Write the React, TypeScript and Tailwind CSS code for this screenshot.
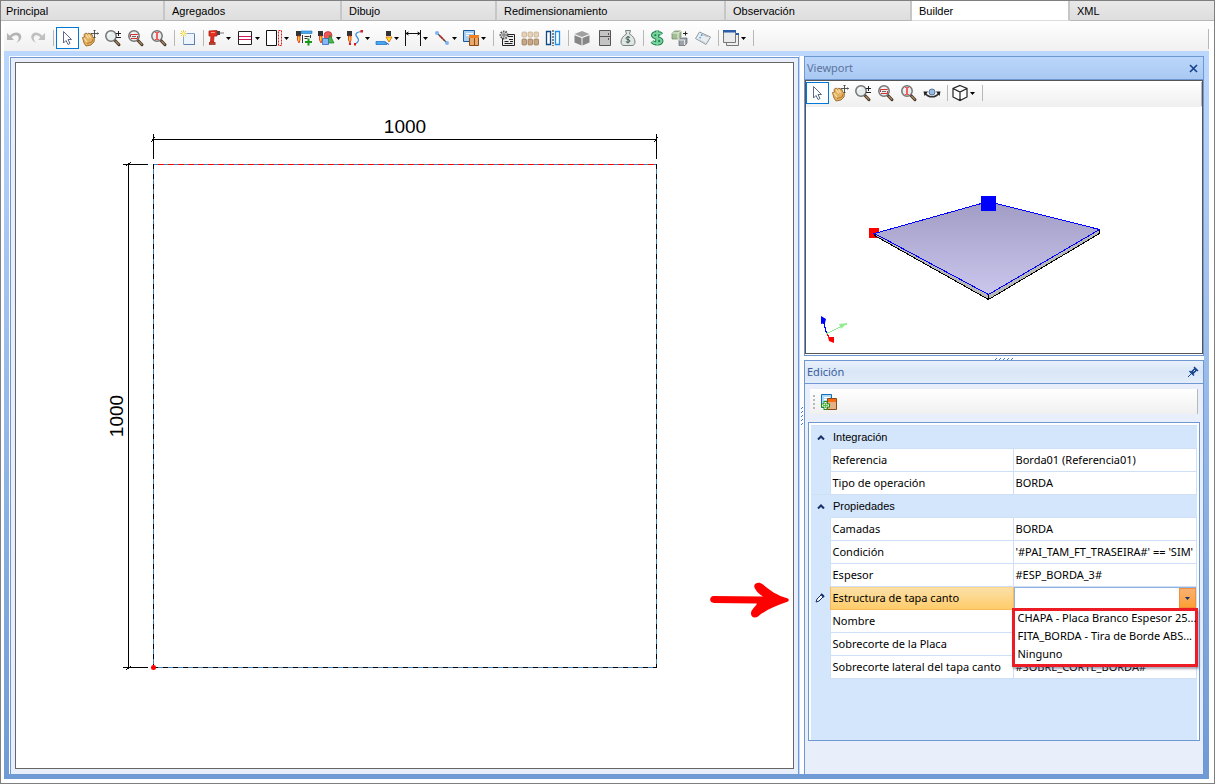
import React from "react";

const Svg = ({ children }: { children: React.ReactNode }) => (
  <svg width="18" height="18" viewBox="0 0 18 18" fill="none" aria-hidden="true" className="shrink-0">
    {children}
  </svg>
);

const Undo = () => (
  <Svg>
    <path d="M1 4v7h7L5.600 8.600C8 5.500 11.500 5.500 12.500 8c.8 2-.5 4.500-2.500 6 4-1.500 6-4.500 5-7.500C13.700 2.800 8 2.200 3.800 6.800z" fill="#b4b4b4" />
  </Svg>
);
const Redo = () => (
  <Svg>
    <path d="M16 4v7H9l2.400-2.400C9 5.500 6 5.500 5 8c-.8 2 .5 4.500 2.500 6C3.500 12.500 1.500 9.500 2.500 6.500 3.800 2.800 9 2.200 13.200 6.800z" fill="#c0c0c0" />
  </Svg>
);
const Pointer = () => (
  <Svg>
    <path d="M5.500 2.500v11.500l2.500-2.500 2 4 2-1-2-4h3.500z" fill="#fff" stroke="#5a6a88" />
  </Svg>
);
const Hand = () => (
  <Svg>
    <path d="M1.500 8.500l2-.5L3 5.500l2-1.500 1.500 1L8 4l1.500 1.500L11 5.500l1 3 1.500 1-.5 3.500-3 3-5 1-2-3z" fill="#e2b060" stroke="#9a6a28" strokeWidth=".9" />
    <path d="M3 9l3 4M5 5.500l2.500 4M7.500 5.500l2 3.500" stroke="#fbe3ac" strokeWidth="1.200" />
    <path d="M6 14.500l5-1.500 1-3" stroke="#b47c34" />
    <path d="M13.500 1v8M9.500 4.500h8M12.500 2l1-1 1 1M12.500 8l1 1 1-1M16.500 3.500l1 1-1 1" stroke="#444" strokeWidth=".9" />
  </Svg>
);
const Lens = ({ children }: { children?: React.ReactNode }) => (
  <Svg>
    <path d="M10.500 11l4.500 4.700" stroke="#4a3a2c" strokeWidth="3" strokeLinecap="round" />
    <path d="M11.500 12l3.500 3.700" stroke="#b08a5a" strokeWidth="1.200" />
    <circle cx="7" cy="7" r="5.200" fill="#e6eef0" stroke="#747474" strokeWidth="1.500" />
    <path d="M4 6.500a3 3 0 013-2.500" stroke="#fff" />
    {children}
  </Svg>
);
const ZoomPm = () => (
  <Lens>
    <path d="M12 4.500h5M14.500 2v5M12 8.500h5" stroke="#222" />
  </Lens>
);
const ZoomWin = () => (
  <Lens>
    <path d="M3.500 8V5.500H10.500V6M10.500 7V9.500H5M4 9.500h1" stroke="#d83030" />
    <path d="M5 7.500h4" stroke="#666" />
  </Lens>
);
const ZoomFit = () => (
  <Lens>
    <path d="M5 3.500h4M5 10.500h4" stroke="#f04848" />
    <path d="M7 3v8" stroke="#f46060" strokeWidth="2" />
  </Lens>
);
const NewItem = () => (
  <Svg>
    <path d="M4.500 4.500h11v11h-11z" fill="#eef4fd" stroke="#88a6cc" />
    <path d="M15.500 5v11M5 15.500h11" stroke="#5c80b0" />
    <path d="M4.500 1v7M1 4.500h7M2 2l5 5M7 2L2 7" stroke="#ecca50" />
    <circle cx="4.500" cy="4.500" r="1.500" fill="#fff6a0" />
  </Svg>
);
const Drill = () => (
  <Svg>
    <path d="M2 2l8-.5V7H7l-.5 6H3.500L4 7H2z" fill="#e8301c" stroke="#a81c10" strokeWidth=".8" />
    <path d="M2 13h6.500v3H2z" fill="#c52a1c" />
    <path d="M10 2h3v4h-3z" fill="#444" />
    <path d="M13 4h4M3 15h5" stroke="#777" />
    <path d="M4 3.500h4" stroke="#ff9a8a" />
  </Svg>
);
const Shelf = () => (
  <Svg>
    <path d="M2.500 2.500h13v13h-13z" fill="#fff" stroke="#222" />
    <path d="M3 7.500h12M3 10.500h12" stroke="#d8185c" />
  </Svg>
);
const SidePanel = () => (
  <Svg>
    <path d="M1.500 1.500h10v15h-10z" fill="#fff" stroke="#111" />
    <path d="M13.500 1.500h3v15h-3z" stroke="#e01818" strokeDasharray="2 1" />
  </Svg>
);
const Bit = () => (
  <>
    <path d="M1 2h5v5H1z" fill="#333" />
    <path d="M2.500 7h2.500v4l-1 3-1.500-3z" fill="#ffd21c" stroke="#d22" strokeWidth=".8" />
  </>
);
const AddLayer = () => (
  <Svg>
    <Bit />
    <path d="M6 2h11v2.500H6z" fill="#44a8f0" stroke="#2272b8" strokeWidth=".6" />
    <path d="M7.500 6v8M15.500 6v3M9.500 7.500h5M9.500 9.500h3" stroke="#333" />
    <path d="M10 13h7M13.500 9.500v7" stroke="#189a18" strokeWidth="2" />
  </Svg>
);
const Shapes = () => (
  <Svg>
    <Bit />
    <circle cx="11" cy="6.500" r="4" fill="#f0555a" stroke="#b82c30" strokeWidth=".7" />
    <path d="M13 6l4 8H10z" fill="#48b848" stroke="#1f7a1f" strokeWidth=".7" />
    <path d="M5.500 9.500h6v6h-6z" fill="#86b8f6" stroke="#2c68c0" strokeWidth=".8" />
  </Svg>
);
const PathIcon = () => (
  <Svg>
    <Bit />
    <path d="M16 2.500C10 3 8.500 5 11 8s2 5-2.500 7.500" stroke="#3a90e0" strokeWidth="1.200" />
    <path d="M14.500 1h2.500v2.500h-2.500zM8 14h2v2.500H8zM3 14h2v2H3z" fill="#e01818" />
  </Svg>
);
const Profile = () => (
  <Svg>
    <path d="M11 2h5v5h-5z" fill="#333" />
    <path d="M11 8h6l-3 5z" fill="#ffe81c" stroke="#e06a10" strokeWidth=".9" />
    <path d="M1 12.500h9l2 3H1z" fill="#46a8f4" stroke="#1c6ab8" strokeWidth=".7" />
    <path d="M10 13l4 2.500" stroke="#1c6ab8" />
  </Svg>
);
const Dimension = () => (
  <Svg>
    <path d="M1.500 1v16M16.500 1v16M2 4.500h14M2 4.500l2.500-1.500M2 4.500L4.500 6M16 4.500L13.500 3M16 4.500L13.500 6" stroke="#111" />
  </Svg>
);
const LineTool = () => (
  <Svg>
    <path d="M4 4l10 10" stroke="#444" strokeWidth="1.200" />
    <path d="M7 7l4 4" stroke="#e02020" strokeWidth="1.800" strokeDasharray="1.500 1" />
    <circle cx="4" cy="4" r="2" fill="#80b4f0" />
    <circle cx="14" cy="14" r="2" fill="#80b4f0" />
  </Svg>
);
const Cabinets = () => (
  <Svg>
    <path d="M1.500 1.500h11v11h-11z" fill="#a8d0f6" stroke="#1a5a9a" />
    <path d="M4 4.500h7M4 6.500h3" stroke="#fff" />
    <path d="M7.500 6.500h9v10h-9z" fill="#e8a86a" stroke="#8a4a18" />
    <path d="M7 6h10v3H7z" fill="#f08020" />
    <path d="M12.500 9v7" stroke="#8a4a18" />
  </Svg>
);
const GearSheet = () => (
  <Svg>
    <path d="M4.500 5.500h12v11h-12z" fill="#eee" stroke="#222" />
    <path d="M10 7.500h5M11 10.500h4M6.500 12.500h4M12 12.500h3M6.500 14.500h8" stroke="#222" />
    <circle cx="6" cy="6" r="3.500" fill="#ddd" stroke="#555" strokeWidth="2" strokeDasharray="1.500 1" />
    <circle cx="6" cy="6" r="1.200" fill="#fff" stroke="#555" />
  </Svg>
);
const Blocks = () => (
  <Svg>
    {[1, 7, 13].map((x) => (
      <g key={x}>
        <rect x={x} y="3" width="4.500" height="5" rx="1" fill="#e5d2b8" stroke="#c0a888" strokeWidth=".7" />
        <rect x={x} y="10" width="4.500" height="6" rx="1" fill="#c8a884" stroke="#94704c" strokeWidth=".7" />
      </g>
    ))}
  </Svg>
);
const Mirror = () => (
  <Svg>
    <path d="M2.500 2.500h4v13h-4z" fill="#fff" stroke="#0e4a80" strokeWidth="1.300" />
    <path d="M11.500 2.500h4v13h-4z" fill="#fff" stroke="#2090f0" strokeWidth="1.300" />
    <path d="M9 1v16" stroke="#111" strokeDasharray="2 1" />
  </Svg>
);
const BoxIcon = () => (
  <Svg>
    <path d="M1.500 5L9 2l7.500 3L9 8z" fill="#a0a0a0" />
    <path d="M1.500 6.200L8.500 9v7.500l-7-3zM16.500 6.200L9.500 9v7.500l7-3z" fill="#868686" />
  </Svg>
);
const Fridge = () => (
  <Svg>
    <path d="M3.500 1.500h11v15h-11z" fill="#c4c4c4" stroke="#555" />
    <path d="M3.500 7.500h11M12.500 4v2M12.500 9v2" stroke="#555" />
  </Svg>
);
const MoneyBag = () => (
  <Svg>
    <path d="M6.500 1.500h5l-1 3.500c3 1.500 5.500 4.500 5.500 8 0 2-1 3.500-3 3.500H5c-2 0-3-1.500-3-3.500 0-3.500 2.500-6.500 5.500-8z" fill="#dfe6e4" stroke="#78807e" />
    <path d="M11 8.500c-1-1-4-.8-4 .8 0 1.800 4 .9 4 2.700 0 1.500-3 1.700-4.200.6M9 7v7.500" stroke="#3a5a4a" />
  </Svg>
);
const Dollar = () => (
  <Svg>
    <path d="M13.500 5.500C12 3.500 5 3.200 5 6.300S13.500 8.500 13.500 12 6 14.800 4 12.500M9.200 1.500v15" stroke="#1f8050" strokeWidth="4" />
    <path d="M13.500 5.500C12 3.500 5 3.200 5 6.300S13.500 8.500 13.500 12 6 14.800 4 12.500M9.200 1.500v15" stroke="#78d49c" strokeWidth="2" />
  </Svg>
);
const CubeMove = () => (
  <Svg>
    <path d="M1 4l3-2h6v6l-3 2H1z" fill="#a4bd96" stroke="#6c8460" strokeWidth=".7" />
    <path d="M1 4h6v6M7 4l3-2" stroke="#e8f2e0" />
    <path d="M8 11l2-2h6v5l-2 2.500H8z" fill="#9ca2a8" stroke="#5c646c" strokeWidth=".7" />
    <path d="M8 11h5.500v5" stroke="#e4e8ec" />
    <path d="M12 4.500h4.500M14.500 2.500v4" stroke="#222" />
  </Svg>
);
const Ticket = () => (
  <Svg>
    <path d="M5.500 3L16.500 8 12 15.500 1.500 9.500z" fill="#e9edf0" stroke="#909aa2" />
    <path d="M7 5l7 3M5 11l6 3" stroke="#b8c0c8" />
    <path d="M8 5.500l-3 5" stroke="#46a0e8" strokeDasharray="1.500 1.500" strokeWidth="1.500" />
  </Svg>
);
const Windows = () => (
  <Svg>
    <path d="M4.500 4.500h12v12h-12z" fill="#eee" stroke="#777" />
    <path d="M1.500 1.500h12v12h-12z" fill="#e9eaec" stroke="#777" />
    <path d="M1 1h13v2.500H1zM14 4h3v2h-3z" fill="#2a5ea8" />
  </Svg>
);
const Orbit = () => (
  <Svg>
    <path d="M2 9c3 5 11 5 14 0" stroke="#333" strokeWidth="1.600" />
    <path d="M.5 7.500h4.500L1.500 12zM17.500 7.500H13l3.500 4.500z" fill="#222" />
    <circle cx="9" cy="8" r="3" fill="#9cbce4" stroke="#54749c" />
  </Svg>
);
const WireCube = () => (
  <Svg>
    <path d="M9 1.500l7 3v8.500l-7 3.500-7-3.500V4.500zM2 4.500l7 3.500 7-3.500M9 8v8.500" stroke="#222" strokeWidth="1.200" fill="#fff" />
  </Svg>
);
const AddCabinet = () => (
  <Svg>
    <path d="M1.500 1.500h10v13h-10z" fill="#a8dcfa" stroke="#1a6ab0" />
    <path d="M4 4.500h6M4 6.500h3" stroke="#fff" />
    <path d="M7.500 5.500h9v11h-9z" fill="#e4b088" stroke="#8a4a18" />
    <path d="M8 6h8v3H8z" fill="#f86a10" />
    <path d="M5.500 8v9M1 12.500h9" stroke="#228c14" strokeWidth="4" />
    <path d="M5.500 9v7M2 12.500h7" stroke="#fff" strokeWidth="2" />
    <path d="M5.500 10v5M3 12.500h5" stroke="#58c040" />
  </Svg>
);

const Caret = ({ className = "text-black" }: { className?: string }) => (
  <svg width="5" height="3" viewBox="0 0 5 3" aria-hidden="true" className={"shrink-0 " + className}>
    <path d="M0 0h5L2.500 3z" fill="currentColor" />
  </svg>
);

type Tool = { label: string; icon?: React.ReactNode; menu?: boolean; active?: boolean; sep?: boolean };
const sep: Tool = { label: "", sep: true };

const viewTools: Tool[] = [
  { label: "Seleccionar", icon: <Pointer />, active: true },
  { label: "Mover", icon: <Hand /> },
  { label: "Zoom", icon: <ZoomPm /> },
  { label: "Zoom ventana", icon: <ZoomWin /> },
  { label: "Zoom extensión", icon: <ZoomFit /> },
];

const mainTools: Tool[] = [
  { label: "Deshacer", icon: <Undo /> },
  { label: "Rehacer", icon: <Redo /> },
  sep,
  ...viewTools,
  sep,
  { label: "Nuevo", icon: <NewItem /> },
  sep,
  { label: "Perforación", icon: <Drill />, menu: true },
  { label: "División", icon: <Shelf />, menu: true },
  { label: "Lateral", icon: <SidePanel />, menu: true },
  { label: "Agregar capa", icon: <AddLayer /> },
  { label: "Formas", icon: <Shapes />, menu: true },
  { label: "Trayectoria", icon: <PathIcon />, menu: true },
  { label: "Perfil", icon: <Profile />, menu: true },
  { label: "Cota", icon: <Dimension />, menu: true },
  { label: "Línea", icon: <LineTool />, menu: true },
  { label: "Módulos", icon: <Cabinets />, menu: true },
  sep,
  { label: "Configuración", icon: <GearSheet /> },
  { label: "Bloques", icon: <Blocks /> },
  { label: "Espejo", icon: <Mirror /> },
  sep,
  { label: "Caja", icon: <BoxIcon /> },
  { label: "Mueble", icon: <Fridge /> },
  { label: "Costo", icon: <MoneyBag /> },
  sep,
  { label: "Precio", icon: <Dollar /> },
  { label: "Convertir", icon: <CubeMove /> },
  { label: "Etiqueta", icon: <Ticket /> },
  sep,
  { label: "Ventanas", icon: <Windows />, menu: true },
  sep,
];

const viewportTools: Tool[] = [
  ...viewTools,
  { label: "Orbitar", icon: <Orbit /> },
  sep,
  { label: "Vista", icon: <WireCube />, menu: true },
  sep,
];

const Tools = ({ items }: { items: Tool[] }) => (
  <>
    {items.map((t, i) =>
      t.sep ? (
        <span key={i} className="flex h-[22px] w-[6px] shrink-0 items-center justify-center">
          <span className="h-4 w-px bg-[#b8b8b8]" />
        </span>
      ) : (
        <button
          key={i}
          type="button"
          aria-label={t.label}
          className={
            "flex h-[22px] shrink-0 items-center " +
            (t.menu ? "w-[29px] gap-px pl-px " : "w-[23px] ") +
            (t.active ? "border border-[#0078d7] bg-white pl-px" : t.menu ? "" : "pl-[2px]")
          }
        >
          {t.icon}
          {t.menu && <Caret />}
        </button>
      ),
    )}
  </>
);

const tabs = [
  { name: "Principal", width: "w-[164px]" },
  { name: "Agregados", width: "w-[177px]" },
  { name: "Dibujo", width: "w-[155px]" },
  { name: "Redimensionamiento", width: "w-[229px]" },
  { name: "Observación", width: "w-[186px]" },
  { name: "Builder", width: "w-[158px]", active: true },
  { name: "XML", width: "flex-1" },
];

const Canvas = () => (
  <svg className="min-h-[640px] w-full flex-1" role="img" aria-label="Placa de 1000 por 1000">
    <g shapeRendering="crispEdges" strokeWidth="1" fill="none">
      <path d="M137.500 71v25M640.500 71v25M137 76.500h504M107 101.500h25M107 604.500h25M112.500 101v504" stroke="#000" />
      <path d="M135 79l4-5M638 79l4-5M110 103l5-4M110 607l5-4" stroke="#000" />
      <path d="M137.500 101.500h503v503h-503z" stroke="#4682b4" />
      <path d="M142 101.500h498" stroke="#f00" strokeDasharray="6 4" />
      <path d="M137.500 101v503M640.500 101v503M137 604.500h504" stroke="#000" strokeDasharray="5 5" />
    </g>
    <circle cx="137.500" cy="604.500" r="2.500" fill="#f00" />
    <g className="font-['Liberation_Sans',sans-serif] text-[19px]" fill="#000" textAnchor="middle">
      <text x="389" y="70">1000</text>
      <text transform="translate(107 353) rotate(-90)">1000</text>
    </g>
  </svg>
);

const Scene = () => (
  <svg className="w-full flex-1" role="img" aria-label="Vista 3D de la placa">
    <defs>
      <linearGradient id="plate" x1="0" y1="0" x2="0" y2="1">
        <stop offset="0" stopColor="#a09cc4" />
        <stop offset="1" stopColor="#cac6ec" />
      </linearGradient>
    </defs>
    <path d="M63 121h10v10H63z" fill="#f00" />
    <g shapeRendering="crispEdges">
      <path d="M68.500 126.500v2l114 64 111-66v-4l-111 65z" fill="#b8b8b8" stroke="#000" />
      <path d="M182.500 188v4" stroke="#000" />
      <path d="M68.500 126.500l114-32 111 28-111 65z" fill="url(#plate)" stroke="#00f" />
      <path d="M175 89h15v15h-15z" fill="#00f" />
      <path d="M20.500 226.500l-3-12" stroke="#00f" />
      <path d="M20.500 226.500l5 7" stroke="#f00" />
      <path d="M20.500 226.500l21-10" stroke="#90ee90" />
    </g>
    <path d="M15 209l5 3-1 4-4 1z" fill="#00f" />
    <path d="M22 230h6v6l-5-2z" fill="#f00" />
    <path d="M33 217l8-1-6 6z" fill="#90ee90" />
  </svg>
);

const Pin = () => (
  <svg width="12" height="12" viewBox="0 0 12 12" aria-hidden="true">
    <path d="M1 11l3.500-3.500" stroke="#15428b" />
    <path d="M2.500 5l4.500 4.500M4 6.500L7.500 3 9 4.500 5.500 8z" fill="#15428b" stroke="#15428b" strokeWidth="1.500" />
    <path d="M7 1l4 4" stroke="#15428b" strokeWidth="1.500" />
    <path d="M6.500 5.500L8 4" stroke="#dbe8fa" />
  </svg>
);

type Row = { name: string; value?: string; select?: boolean };
const groups: { title: string; rows: Row[] }[] = [
  {
    title: "Integración",
    rows: [
      { name: "Referencia", value: "Borda01 (Referencia01)" },
      { name: "Tipo de operación", value: "BORDA" },
    ],
  },
  {
    title: "Propiedades",
    rows: [
      { name: "Camadas", value: "BORDA" },
      { name: "Condición", value: "'#PAI_TAM_FT_TRASEIRA#' == 'SIM'" },
      { name: "Espesor", value: "#ESP_BORDA_3#" },
      { name: "Estructura de tapa canto", select: true },
      { name: "Nombre", value: "" },
      { name: "Sobrecorte de la Placa", value: "" },
      { name: "Sobrecorte lateral del tapa canto", value: "#SOBRE_CORTE_BORDA#" },
    ],
  },
];

const options = ["CHAPA - Placa Branco Espesor 25...", "FITA_BORDA - Tira de Borde ABS...", "Ninguno"];

const StructureSelect = () => (
  <div className="relative flex h-[22px]">
    <select
      id="estructura"
      defaultValue=""
      className="h-full w-full appearance-none border border-[#8fb2e3] bg-white px-1 outline-none"
    >
      <option value="" />
      {options.map((o) => (
        <option key={o}>{o}</option>
      ))}
    </select>
    <span className="pointer-events-none absolute inset-y-px right-0 flex w-[17px] items-center justify-center border border-[#f0903c] bg-linear-to-b from-[#f8b070] to-[#fca030]">
      <Caret className="text-[#15306b]" />
    </span>
    <ul
      role="listbox"
      aria-label="Estructura de tapa canto"
      className="absolute top-[21px] -right-[2px] -left-[2px] z-10 h-[59px] border-[3px] border-[#ed1c24] bg-white shadow-[1px_2px_2px_rgba(80,80,110,0.5)]"
    >
      {options.map((o) => (
        <li key={o} role="option" aria-selected="false" className="h-[18px] pl-[3px] leading-[14px] whitespace-nowrap">
          {o}
        </li>
      ))}
    </ul>
  </div>
);

const PropertyTable = () => (
  <table className="w-full table-fixed border-collapse leading-[22px]">
    <colgroup>
      <col className="w-[19px]" />
      <col className="w-[183px]" />
      <col />
    </colgroup>
    {groups.map((g) => (
      <tbody key={g.title}>
        <tr className="h-[23px] border-t border-[#cfdff5]">
          <th className="p-0">
            <button type="button" aria-label={"Contraer " + g.title} className="flex h-[22px] w-full items-center justify-center">
              <svg width="8" height="5" viewBox="0 0 8 5" fill="none" aria-hidden="true">
                <path d="M1 4.500l3-3 3 3" stroke="#15306b" strokeWidth="2" />
              </svg>
            </button>
          </th>
          <th
            colSpan={2}
            scope="colgroup"
            className="p-0 pl-[3px] text-left font-['Liberation_Sans',sans-serif] font-normal"
          >
            {g.title}
          </th>
        </tr>
        {g.rows.map((r) => (
          <tr key={r.name} className="h-[23px]">
            <td className="p-0">
              {r.select && (
                <svg width="10" height="10" viewBox="0 0 10 10" fill="none" className="mx-auto" aria-hidden="true">
                  <path d="M1 9l1-3 5-5 2 2-5 5z" fill="#fff" stroke="#15306b" />
                  <path d="M6 1l3 3" stroke="#15306b" strokeWidth="2" />
                </svg>
              )}
            </td>
            <th
              scope="row"
              className={
                "border p-0 pl-[2px] text-left font-normal whitespace-nowrap " +
                (r.select
                  ? "border-[#f8b85c] bg-linear-to-b from-[#fbe0a8] to-[#ffcb66]"
                  : "border-[#cfdff5] bg-white")
              }
            >
              {r.select ? <label htmlFor="estructura">{r.name}</label> : r.name}
            </th>
            <td
              className={
                "border border-[#cfdff5] bg-white p-0 whitespace-nowrap " +
                (r.select ? "" : "overflow-hidden pl-[2px]")
              }
            >
              {r.select ? <StructureSelect /> : r.value}
            </td>
          </tr>
        ))}
      </tbody>
    ))}
  </table>
);

const Grip = ({ vertical }: { vertical?: boolean }) => (
  <span className={"flex gap-px " + (vertical ? "flex-col" : "")}>
    {[0, 1, 2, 3, 4].map((i) => (
      <svg key={i} width="3" height="3" viewBox="0 0 3 3" aria-hidden="true">
        <path d="M0 2h1v1H0zM1 1h1v1H1z" fill="#3a7ad0" />
      </svg>
    ))}
  </span>
);

export default function App() {
  return (
    <div className="flex min-h-screen flex-col border border-[#7f7f7f] bg-white font-['Noto_Sans',sans-serif] text-[11px] text-black">
      <nav role="tablist" className="flex h-5 font-['Liberation_Sans',sans-serif]">
        {tabs.map((t, i) => (
          <button
            key={t.name}
            type="button"
            role="tab"
            aria-selected={!!t.active}
            className={
              "border-b pt-px text-left leading-[18px] " +
              (i === 0 ? "pl-[5px] " : "pl-[7px] ") +
              t.width +
              (t.active ? " border-b-[#dcdcdc] bg-white" : " border-b-[#b8b8b8] bg-linear-to-b from-[#e8e8e8] to-[#dedede]") +
              (t.name === "XML" ? "" : " border-r-2 border-r-[#c6c6c6]")
            }
          >
            {t.name}
          </button>
        ))}
      </nav>

      <main className="mr-[5px] mb-1 ml-[3px] flex flex-1 flex-col">
        <div role="toolbar" className="flex h-[30px] items-end bg-linear-to-b from-white to-[#f0f0f0] pb-[2px]">
          <Tools items={mainTools} />
          <span className="ml-auto h-5 w-px bg-[#b8b8b8]" />
        </div>

        <div className="flex flex-1 flex-col bg-linear-to-b from-[#bbd7fd] to-[#6f9ad4] p-[5px]">
          <div className="grid flex-1 grid-cols-[minmax(0,1fr)_5px_400px] bg-white">
            <section className="mt-px ml-px flex border-x border-t border-[#6f97d1] bg-[#e8effa] p-1 pb-[5px]">
              <div className="flex flex-1 border border-[#666] bg-white">
                <Canvas />
              </div>
            </section>

            <div className="flex items-center justify-center border-l border-[#c2d8f8]">
              <Grip vertical />
            </div>

            <div className="flex flex-col">
              <section className="flex h-[300px] flex-col border border-[#6f97d1] pb-px">
                <header className="flex h-[23px] items-center justify-between border-b border-[#6f97d1] bg-linear-to-b from-[#bbd6fb] to-[#a9c9f2] pr-[5px] pl-[2px] text-[#5c739e]">
                  <h2>Viewport</h2>
                  <button type="button" aria-label="Cerrar">
                    <svg width="9" height="9" viewBox="0 0 9 9" aria-hidden="true">
                      <path d="M1 1l7 7M8 1L1 8" stroke="#15428b" strokeWidth="1.600" />
                    </svg>
                  </button>
                </header>
                <div className="flex flex-1 flex-col border border-[#555]">
                  <div role="toolbar" className="flex h-[26px] items-start bg-linear-to-b from-white to-[#efefef] pt-px">
                    <Tools items={viewportTools} />
                    <span className="ml-auto h-6 w-px bg-[#b8b8b8]" />
                  </div>
                  <Scene />
                </div>
              </section>

              <div className="flex h-1 items-center justify-center">
                <Grip />
              </div>

              <section className="flex flex-1 flex-col border-x border-t border-[#6f97d1] bg-[#e8effa] pb-[33px]">
                <header className="flex h-[23px] items-center justify-between border-b border-[#6f97d1] bg-linear-to-b from-[#e9f0fb] via-[#d8e6f7] to-[#e3edfa] pr-1 pl-[2px] text-[#3c5c9c]">
                  <h2>Edición</h2>
                  <button type="button" aria-label="Fijar panel">
                    <Pin />
                  </button>
                </header>
                <div
                  role="toolbar"
                  className="mx-[5px] mt-[5px] flex h-[25px] items-center border-r border-[#b8b8b8] bg-linear-to-b from-white to-[#f0f0f0] pl-[3px]"
                >
                  <span className="flex w-[2px] flex-col gap-[2px]">
                    {[0, 1, 2, 3].map((i) => (
                      <span key={i} className="h-[2px] bg-[#b8b8b8]" />
                    ))}
                  </span>
                  <button type="button" aria-label="Agregar módulo" className="ml-1 p-px">
                    <AddCabinet />
                  </button>
                </div>
                <div className="mx-[3px] mt-2 flex flex-1 border border-[#6f97d1] bg-white px-[2px] pt-[2px]">
                  <div className="flex-1 bg-[#d4e6fc]">
                    <PropertyTable />
                  </div>
                </div>
              </section>
            </div>
          </div>
        </div>
      </main>

      <svg
        width="80"
        height="38"
        viewBox="0 0 80 38"
        fill="none"
        aria-hidden="true"
        className="absolute top-[581px] right-[425px]"
      >
        <path
          d="M3 15c-4 1-4 7 1 7l43 .5c-2 4-6 6-6 10 0 4 4 5 7 3 8-7 19-11 30-15 1-1 1-2 0-3-11-3-18-8-25-14-5-4-11 0-8 4 2 4 5 6 8 8z"
          fill="#f00"
        />
      </svg>
    </div>
  );
}
